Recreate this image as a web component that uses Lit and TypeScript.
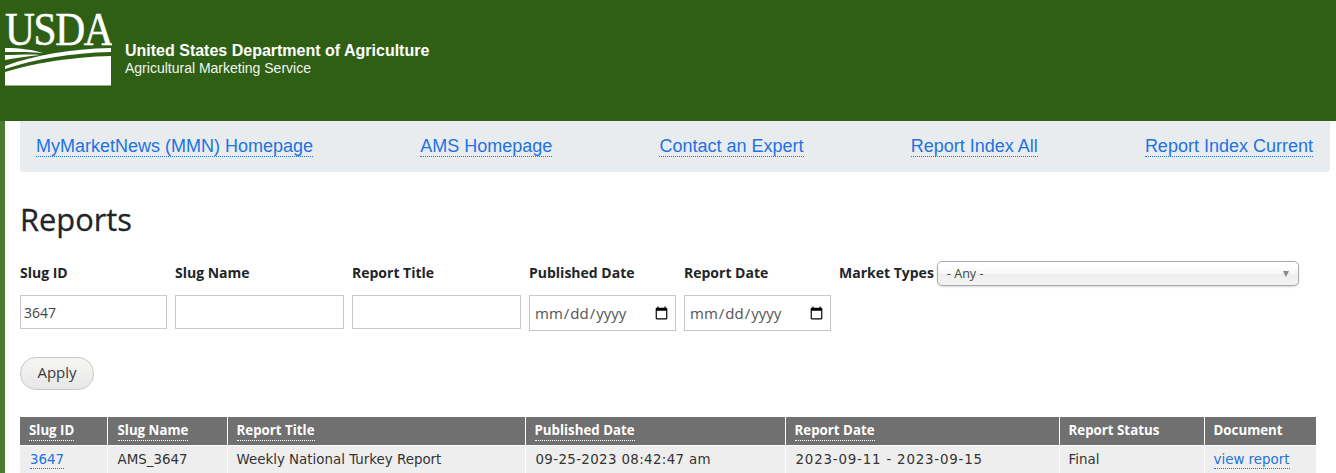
import { LitElement, html, css } from "lit";
import { customElement } from "lit/decorators.js";

@customElement("app-root")
export class AppRoot extends LitElement {
  static styles = css`
    :host {
      display: block;
      height: 473px;
      overflow: hidden;
      background: #fff;
      color: #212529;
      font-family: "Open Sans", "Noto Sans", sans-serif;
    }
    .banner {
      height: 121px;
      background: #2f5f14;
      display: flex;
      align-items: flex-start;
      color: #fff;
      font-family: "Liberation Sans", Arial, sans-serif;
    }
    .logo {
      display: block;
      width: 112px;
      height: 90px;
      flex: none;
    }
    .logo text {
      font-family: "Liberation Serif", serif;
      font-size: 46px;
      letter-spacing: -1.5px;
      fill: #fff;
      stroke: #fff;
      stroke-width: 0.5px;
    }
    .agency {
      margin: 42px 0 0 13px;
    }
    .dept {
      font-size: 16px;
      font-weight: 700;
      line-height: 18px;
    }
    .svc {
      font-size: 14px;
      line-height: 16px;
      color: #f2f5ef;
    }
    .main {
      border-left: 5px solid #4c7a30;
      padding: 0 6px 0 15px;
    }
    .nav {
      height: 51px;
      background: #e9ecef;
      border-radius: 0 0 4px 4px;
      padding: 0 17px 0 16px;
      display: flex;
      justify-content: space-between;
      align-items: center;
      font-family: "Liberation Sans", Arial, sans-serif;
      font-size: 18px;
    }
    a {
      color: #2273e0;
      text-decoration: none;
      border-bottom: 1px dotted #2273e0;
    }
    .nav a {
      line-height: 20px;
    }
    h1 {
      margin: 28px 0 0;
      font-size: 30.8px;
      line-height: 38px;
      font-weight: 400;
      -webkit-text-stroke: 0.3px #212529;
      font-family: "Open Sans", sans-serif;
    }
    .filters {
      display: flex;
      gap: 8px;
      margin-top: 23px;
      height: 71px;
    }
    .field {
      display: flex;
      flex-direction: column;
      align-items: flex-start;
    }
    label {
      font-size: 14px;
      font-weight: 700;
      line-height: 20px;
      white-space: nowrap;
    }
    .field label {
      margin: 2px 0 12px;
    }
    input {
      box-sizing: border-box;
      border: 1px solid #c8c8c8;
      margin: 0;
      padding: 0 3px;
      height: 34px;
      background: #fff;
      color: #444;
      font-family: "Open Sans", sans-serif;
      font-size: 14px;
      border-radius: 0;
      outline: none;
    }
    .w147 { width: 147px; }
    .w169 { width: 169px; }
    input[type="date"] {
      height: 36px;
      width: 147px;
      padding: 0 4px;
      font-size: 15px;
      color: #555;
    }
    .market {
      display: flex;
      align-items: flex-start;
      gap: 3px;
    }
    .market label {
      margin-top: 2px;
    }
    .select {
      box-sizing: border-box;
      width: 362px;
      height: 25px;
      border: 1px solid #aaa;
      border-radius: 5px;
      background: linear-gradient(#fff 20%, #f6f6f6 50%, #eee 52%, #f4f4f4);
      box-shadow: 0 1px 2px rgba(0, 0, 0, 0.15);
      display: flex;
      align-items: center;
      justify-content: space-between;
      padding: 0 9px;
      font-size: 12.6px;
      color: #444;
    }
    .caret {
      width: 0;
      height: 0;
      border-left: 3.5px solid transparent;
      border-right: 3.5px solid transparent;
      border-top: 6px solid #888;
    }
    .apply {
      display: block;
      margin-top: 25px;
      box-sizing: border-box;
      width: 74px;
      height: 33px;
      border: 1px solid #c8c8c8;
      border-radius: 16px;
      background: linear-gradient(#f6f6f3, #e7e7e7);
      color: #3a3a3a;
      font-family: "Open Sans", sans-serif;
      font-size: 15px;
      padding: 0 0 3px;
    }
    table {
      margin-top: 27px;
      width: 1296px;
      table-layout: fixed;
      border-collapse: collapse;
      font-family: "DejaVu Sans", Verdana, sans-serif;
      font-size: 13.4px;
    }
    th {
      background: #707070;
      color: #fff;
      height: 28px;
      padding: 0 9px 1px;
      box-sizing: border-box;
      text-align: left;
      font-size: 13.3px;
      font-weight: 700;
      font-family: "Open Sans", sans-serif;
      border-left: 1px solid #fff;
      border-bottom: 1px solid #fff;
      white-space: nowrap;
    }
    th:first-child, td:first-child { border-left: 0; }
    th span {
      border-bottom: 1px dotted #fff;
      padding-bottom: 1px;
    }
    td {
      background: #eee;
      height: 28px;
      box-sizing: border-box;
      padding: 0 9px;
      color: #333;
      border-left: 1px solid #fff;
      white-space: nowrap;
    }
    td:nth-child(-n + 2), th:nth-child(2) { padding-left: 10px; }
    td.pub { letter-spacing: 0.35px; padding-left: 10px; }
    td.rep { letter-spacing: 0.8px; padding-left: 10px; }
    .c1 { width: 87px; }
    .c2 { width: 120px; }
    .c3 { width: 298px; }
    .c4 { width: 260px; }
    .c5 { width: 274px; }
    .c6 { width: 145px; }
    .c7 { width: 112px; }
    td a { padding-bottom: 1px; }
  `;

  render() {
    return html`
      <div class="banner">
        <svg class="logo" viewBox="0 0 112 90" role="img" aria-label="USDA">
          <text transform="translate(5 44.5) scale(.9 1)">USDA</text>
          <path fill="#fff" d="M5 48C20 48 34 50 43 53C33 52 18 52 5 52Z" />
          <path fill="#fff" d="M5 55C18 55 30 54 40 55C28 56 16 58 5 60Z" />
          <path fill="#fff" d="M5 66C35 55 70 49 111 48V52C70 53 35 59 5 69Z" />
          <path fill="#fff" d="M5 72C35 63 70 57 111 56V85.5H5Z" />
        </svg>
        <div class="agency">
          <div class="dept">United States Department of Agriculture</div>
          <div class="svc">Agricultural Marketing Service</div>
        </div>
      </div>
      <div class="main">
        <nav class="nav">
          <a href="#">MyMarketNews (MMN) Homepage</a>
          <a href="#">AMS Homepage</a>
          <a href="#">Contact an Expert</a>
          <a href="#">Report Index All</a>
          <a href="#">Report Index Current</a>
        </nav>
        <h1>Reports</h1>
        <div class="filters">
          <div class="field"><label>Slug ID</label><input class="w147" .value=${"3647"} /></div>
          <div class="field"><label>Slug Name</label><input class="w169" /></div>
          <div class="field"><label>Report Title</label><input class="w169" /></div>
          <div class="field"><label>Published Date</label><input type="date" /></div>
          <div class="field"><label>Report Date</label><input type="date" /></div>
          <div class="market">
            <label>Market Types</label>
            <div class="select"><span>- Any -</span><i class="caret"></i></div>
          </div>
        </div>
        <button class="apply">Apply</button>
        <table>
          <colgroup>
            <col class="c1" /><col class="c2" /><col class="c3" /><col class="c4" /><col class="c5" /><col class="c6" /><col class="c7" />
          </colgroup>
          <thead>
            <tr>
              <th><span>Slug ID</span></th>
              <th><span>Slug Name</span></th>
              <th><span>Report Title</span></th>
              <th><span>Published Date</span></th>
              <th><span>Report Date</span></th>
              <th>Report Status</th>
              <th>Document</th>
            </tr>
          </thead>
          <tbody>
            <tr>
              <td><a href="#">3647</a></td>
              <td>AMS_3647</td>
              <td>Weekly National Turkey Report</td>
              <td class="pub">09-25-2023 08:42:47 am</td>
              <td class="rep">2023-09-11 - 2023-09-15</td>
              <td>Final</td>
              <td><a href="#">view report</a></td>
            </tr>
          </tbody>
        </table>
      </div>
    `;
  }
}
